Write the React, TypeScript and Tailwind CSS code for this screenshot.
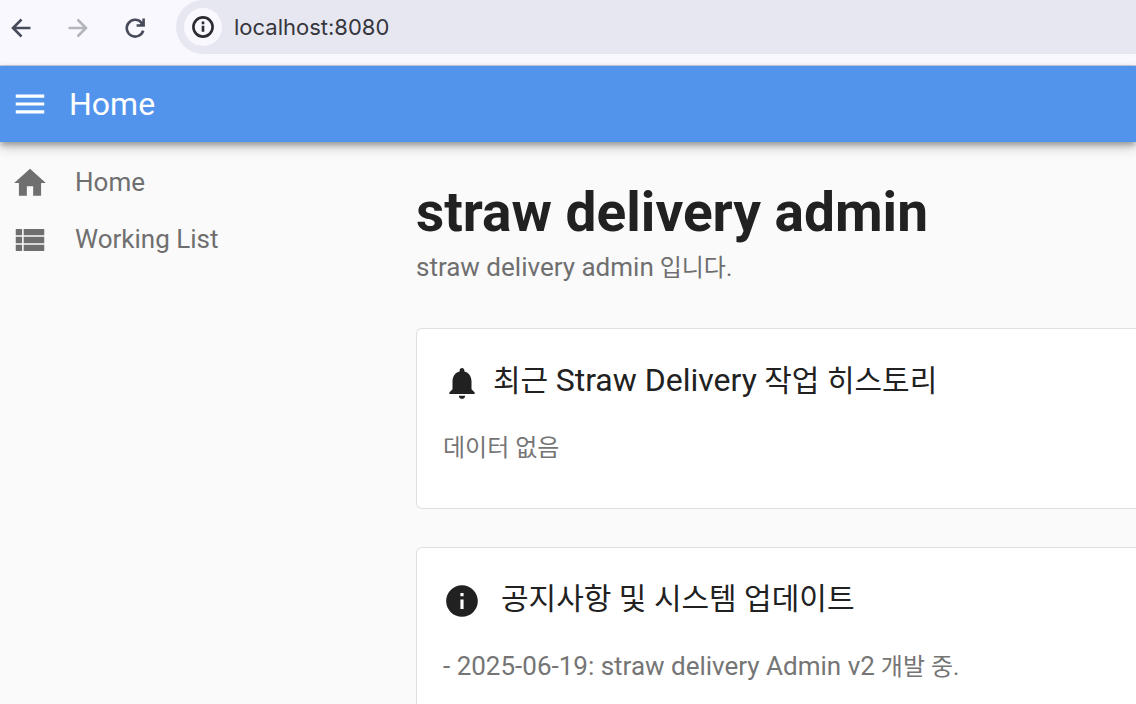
import type { ReactNode } from "react";

interface IconProps {
  path: string;
  className?: string;
}

// Material icon set, 24x24 grid
const ICONS = {
  menu: "M3 18h18v-2H3v2zm0-5h18v-2H3v2zm0-7v2h18V6H3z",
  home: "M10 20v-6h4v6h5v-8h3L12 3 2 12h3v8z",
  list: "M3 14h4v-4H3v4zm0 5h4v-4H3v4zM3 9h4V5H3v4zm5 5h13v-4H8v4zm0 5h13v-4H8v4zM8 5v4h13V5H8z",
  bell: "M12 22c1.1 0 2-.9 2-2h-4c0 1.1.89 2 2 2zm6-6v-5c0-3.07-1.64-5.64-4.5-6.32V4c0-.83-.67-1.5-1.5-1.5s-1.5.67-1.5 1.5v.68C7.63 5.36 6 7.92 6 11v5l-2 2v1h16v-1l-2-2z",
  info: "M12 2C6.48 2 2 6.48 2 12s4.48 10 10 10 10-4.48 10-10S17.52 2 12 2zm1 15h-2v-6h2v6zm0-8h-2V7h2v2z",
};

const Icon = ({ path, className = "" }: IconProps) => (
  <svg viewBox="0 0 24 24" fill="currentColor" aria-hidden="true" className={`shrink-0 ${className}`}>
    <path d={path} />
  </svg>
);

// Toolbar glyphs are outlined and drawn on a 28x28 grid
const ToolbarIcon = ({ children }: { children: ReactNode }) => (
  <svg viewBox="0 0 28 28" fill="none" stroke="currentColor" strokeWidth="2.6" aria-hidden="true" className="size-7">
    {children}
  </svg>
);

const BrowserBar = () => (
  <div className="flex h-[66px] shrink-0 items-start border-b border-[#c9cddd] bg-[#f9f8ff] font-['Inter',sans-serif]">
    <div className="flex h-14 items-center gap-7 pl-[7px] text-[#474a59]">
      <button type="button" aria-label="Back">
        <ToolbarIcon>
          <path d="M23.5 14H6.5M14.5 5.5L6 14l8.5 8.5" />
        </ToolbarIcon>
      </button>
      <button type="button" aria-label="Forward" className="text-[#b4b4bb]">
        <ToolbarIcon>
          <path d="M5.5 14h17M14.5 5.5L23 14l-8.5 8.5" />
        </ToolbarIcon>
      </button>
      <button type="button" aria-label="Reload">
        <ToolbarIcon>
          <path d="M24.2 16.6A8.4 8.4 0 1 1 22.4 8.6L24.4 11" />
          <path d="M25.9 4.5v8.3h-8.3v-2.6h3.2l2.5-2.5V4.5z" fill="currentColor" stroke="none" />
        </ToolbarIcon>
      </button>
    </div>
    <div className="ml-[29px] flex h-[54px] flex-1 items-center rounded-l-full bg-[#e7e7f1] pl-2">
      <button
        type="button"
        aria-label="Site information"
        className="flex size-[38px] items-center justify-center rounded-full bg-[#f9f8ff] text-[#2b2b31]"
      >
        <ToolbarIcon>
          <circle cx="14" cy="14" r="9.6" />
          <path d="M14 12.8v6M14 8.6v2.6" />
        </ToolbarIcon>
      </button>
      <input
        aria-label="Address"
        defaultValue="localhost:8080"
        className="ml-3 flex-1 bg-transparent pt-px text-[22px] text-[#36363d] outline-none"
      />
    </div>
  </div>
);

const NavItem = ({ icon, label }: { icon: string; label: string }) => (
  <a href="#" className="flex h-[57px] items-center gap-[26px] pl-[11px]">
    <Icon path={icon} className="size-[38px]" />
    <span className="text-[26px]">{label}</span>
  </a>
);

interface CardProps {
  icon: string;
  title: ReactNode;
  gap: string;
  children: ReactNode;
}

const Card = ({ icon, title, gap, children }: CardProps) => (
  <section className="rounded-l-md border border-r-0 border-[#e0e0e0] bg-white px-[26px] pt-[27px] pb-[41px]">
    <div className={`flex items-center ${gap}`}>
      <Icon path={icon} className="mt-1 size-[38px]" />
      <h2 className="text-[30px] leading-[48px]">{title}</h2>
    </div>
    <p className="mt-6 text-[24px] leading-[38px] text-[#757575]">{children}</p>
  </section>
);

export default function App() {
  return (
    <div className="flex h-screen flex-col overflow-hidden bg-[#fafafa] font-['Roboto','Noto_Sans_CJK_KR',sans-serif] text-[#212121]">
      <BrowserBar />

      {/* App bar */}
      <header className="relative flex h-[76px] shrink-0 items-center gap-5 bg-[#5294ec] pl-[11px] text-white shadow-[0_3px_6px_rgba(0,0,0,0.3),0_6px_12px_rgba(0,0,0,0.16)]">
        <button type="button" aria-label="Toggle menu">
          <Icon path={ICONS.menu} className="size-[38px]" />
        </button>
        <h1 className="text-[32px]">Home</h1>
      </header>

      <div className="flex flex-1">
        <nav className="w-[416px] shrink-0 pt-3 text-[#6f6f6f]">
          <NavItem icon={ICONS.home} label="Home" />
          <NavItem icon={ICONS.list} label="Working List" />
        </nav>

        <main className="min-w-0 flex-1 pt-9">
          <h2 className="text-[55px] leading-[68px] font-bold">straw delivery admin</h2>
          <p className="text-[24px] leading-[42px] text-[#6f6f6f]">
            <span className="text-[26px]">straw delivery admin</span> 입니다.
          </p>

          <div className="mt-[39px] flex flex-col gap-[38px]">
            <Card
              icon={ICONS.bell}
              title={
                <>
                  최근 <span className="text-[32px]">Straw Delivery</span> 작업 히스토리
                </>
              }
              gap="gap-3"
            >
              데이터 없음
            </Card>
            <Card icon={ICONS.info} title="공지사항 및 시스템 업데이트" gap="gap-5">
              <span className="text-[26px]">- 2025-06-19: straw delivery Admin v2</span> 개발 중.
            </Card>
          </div>
        </main>
      </div>
    </div>
  );
}
